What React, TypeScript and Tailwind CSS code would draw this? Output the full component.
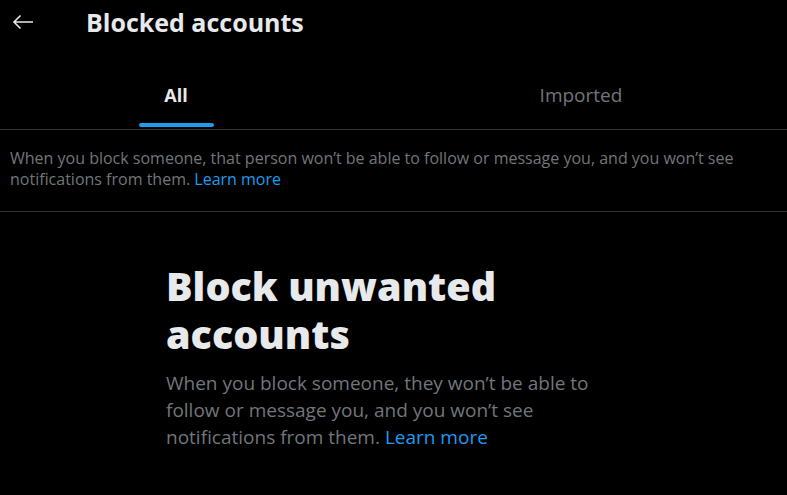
const FONT = "font-['Open_Sans','Noto_Sans',sans-serif]";

function BackArrow() {
  return (
    <svg width="22" height="16" viewBox="0 0 22 16" fill="none" className="text-[#e7e9ea]">
      <path d="M21 8H2M8.5 1.5L2 8l6.5 6.5" stroke="currentColor" strokeWidth="1.6" />
    </svg>
  );
}

export default function App() {
  return (
    <div className={`h-[495px] w-[787px] overflow-hidden bg-black ${FONT}`}>
      <header className="flex h-[44px] items-center">
        <div className="flex w-[86px] pl-[12px]">
          <BackArrow />
        </div>
        <h1 className="pt-[1px] text-[25px] font-bold leading-none text-[#e7e9ea]">Blocked accounts</h1>
      </header>

      <nav className="flex h-[86px] border-b border-[#2f3336]">
        <div className="flex w-[352px] flex-col items-center justify-end pb-[2px]">
          <span className="text-[18px] font-bold leading-[24px] text-[#e7e9ea]">All</span>
          <span className="mt-[16px] h-[4px] w-[75px] rounded-full bg-[#1d9bf0]" />
        </div>
        <div className="flex flex-1 flex-col items-center justify-end pb-[2px] pl-[23px]">
          <span className="text-[19px] leading-[24px] text-[#71767b]">Imported</span>
          <span className="mt-[16px] h-[4px]" />
        </div>
      </nav>

      <p className="border-b border-[#2f3336] px-[10px] pb-[21px] pt-[18px] text-[16px] leading-[21px] text-[#71767b]">
        <span>
          When you block someone, that person won’t be able to follow or message you, and you won’t
          see notifications from them.
        </span>{" "}
        <a className="text-[#1d9bf0]">Learn more</a>
      </p>

      <section className="pl-[166px] pt-[50px]">
        <div className="w-[450px]">
          <h2 className="text-[39.5px] font-extrabold leading-[48px] text-[#e7e9ea]">
            Block unwanted accounts
          </h2>
          <p className="mt-[12px] text-[19px] leading-[27px] text-[#71767b]">
            <span>
              When you block someone, they won’t be able to follow or message you, and you won’t see
              notifications from them.
            </span>{" "}
            <a className="text-[#1d9bf0]">Learn more</a>
          </p>
        </div>
      </section>
    </div>
  );
}
